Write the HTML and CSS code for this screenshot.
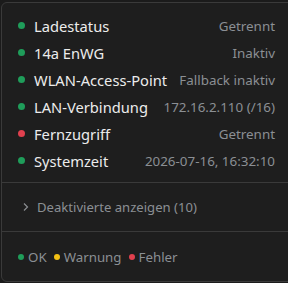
FILE: index.html
```html
<!DOCTYPE html>
<html lang="de">
<head>
<meta charset="utf-8">
<link rel="stylesheet" href="styles.css">
</head>
<body>
<div class="page">
  <div class="card">
    <ul class="rows">
      <li class="row"><span class="dot ok"></span><span class="label">Ladestatus</span><span class="value">Getrennt</span></li>
      <li class="row"><span class="dot ok"></span><span class="label">14a EnWG</span><span class="value">Inaktiv</span></li>
      <li class="row"><span class="dot ok"></span><span class="label">WLAN-Access-Point</span><span class="value">Fallback inaktiv</span></li>
      <li class="row"><span class="dot ok"></span><span class="label">LAN-Verbindung</span><span class="value">172.16.2.110 (/16)</span></li>
      <li class="row"><span class="dot err"></span><span class="label">Fernzugriff</span><span class="value">Getrennt</span></li>
      <li class="row"><span class="dot ok"></span><span class="label">Systemzeit</span><span class="value">2026-07-16, 16:32:10</span></li>
    </ul>
    <div class="toggle">
      <svg class="chev" width="8" height="10" viewBox="0 0 8 10"><path d="M2 1.5 L5.5 5 L2 8.5" fill="none" stroke="#8a8d91" stroke-width="1.2"/></svg>
      <span>Deaktivierte anzeigen (10)</span>
    </div>
    <div class="legend">
      <span class="litem"><span class="ldot ok"></span>OK</span>
      <span class="litem"><span class="ldot warn"></span>Warnung</span>
      <span class="litem"><span class="ldot err"></span>Fehler</span>
    </div>
  </div>
</div>
</body>
</html>
```
FILE: styles.css
```css
html, body {
  margin: 0;
  padding: 0;
  background: #1b1b1b;
  overflow: hidden;
}
body {
  font-family: "Noto Sans", "Open Sans", sans-serif;
  width: 288px;
  height: 283px;
}
.page {
  padding: 2px 0 0 1px;
}
.card {
  box-sizing: border-box;
  height: 280px;
  margin-right: -14px;
  border: 1px solid #3a3a3a;
  border-radius: 6px;
  background: #1e1e1e;
  display: flex;
  flex-direction: column;
}
.rows {
  list-style: none;
  margin: 0;
  padding: 9px 26px 8px 16px;
  border-bottom: 1px solid #3a3a3a;
}
.row {
  height: 27px;
  display: flex;
  align-items: center;
}
.dot {
  width: 7px;
  height: 7px;
  border-radius: 50%;
  flex: none;
  margin-right: 9px;
}
.ok { background: #1f9d5a; }
.err { background: #e0404e; }
.warn { background: #f2c014; }
.label {
  color: #ececec;
  font-size: 14.7px;
  flex: 1;
  white-space: nowrap;
}
.value {
  color: #8b8f94;
  font-size: 13.4px;
  white-space: nowrap;
}
.toggle {
  height: 48px;
  display: flex;
  align-items: center;
  gap: 7px;
  padding-left: 20px;
  color: #8b8f94;
  font-size: 13.1px;
  border-bottom: 1px solid #3a3a3a;
}
.chev { flex: none; }
.legend {
  flex: 1;
  display: flex;
  align-items: center;
  gap: 7px;
  padding-left: 16px;
  color: #8b8f94;
  font-size: 13.3px;
}
.litem {
  display: flex;
  align-items: center;
  gap: 4px;
}
.ldot {
  width: 6px;
  height: 6px;
  border-radius: 50%;
}
```
